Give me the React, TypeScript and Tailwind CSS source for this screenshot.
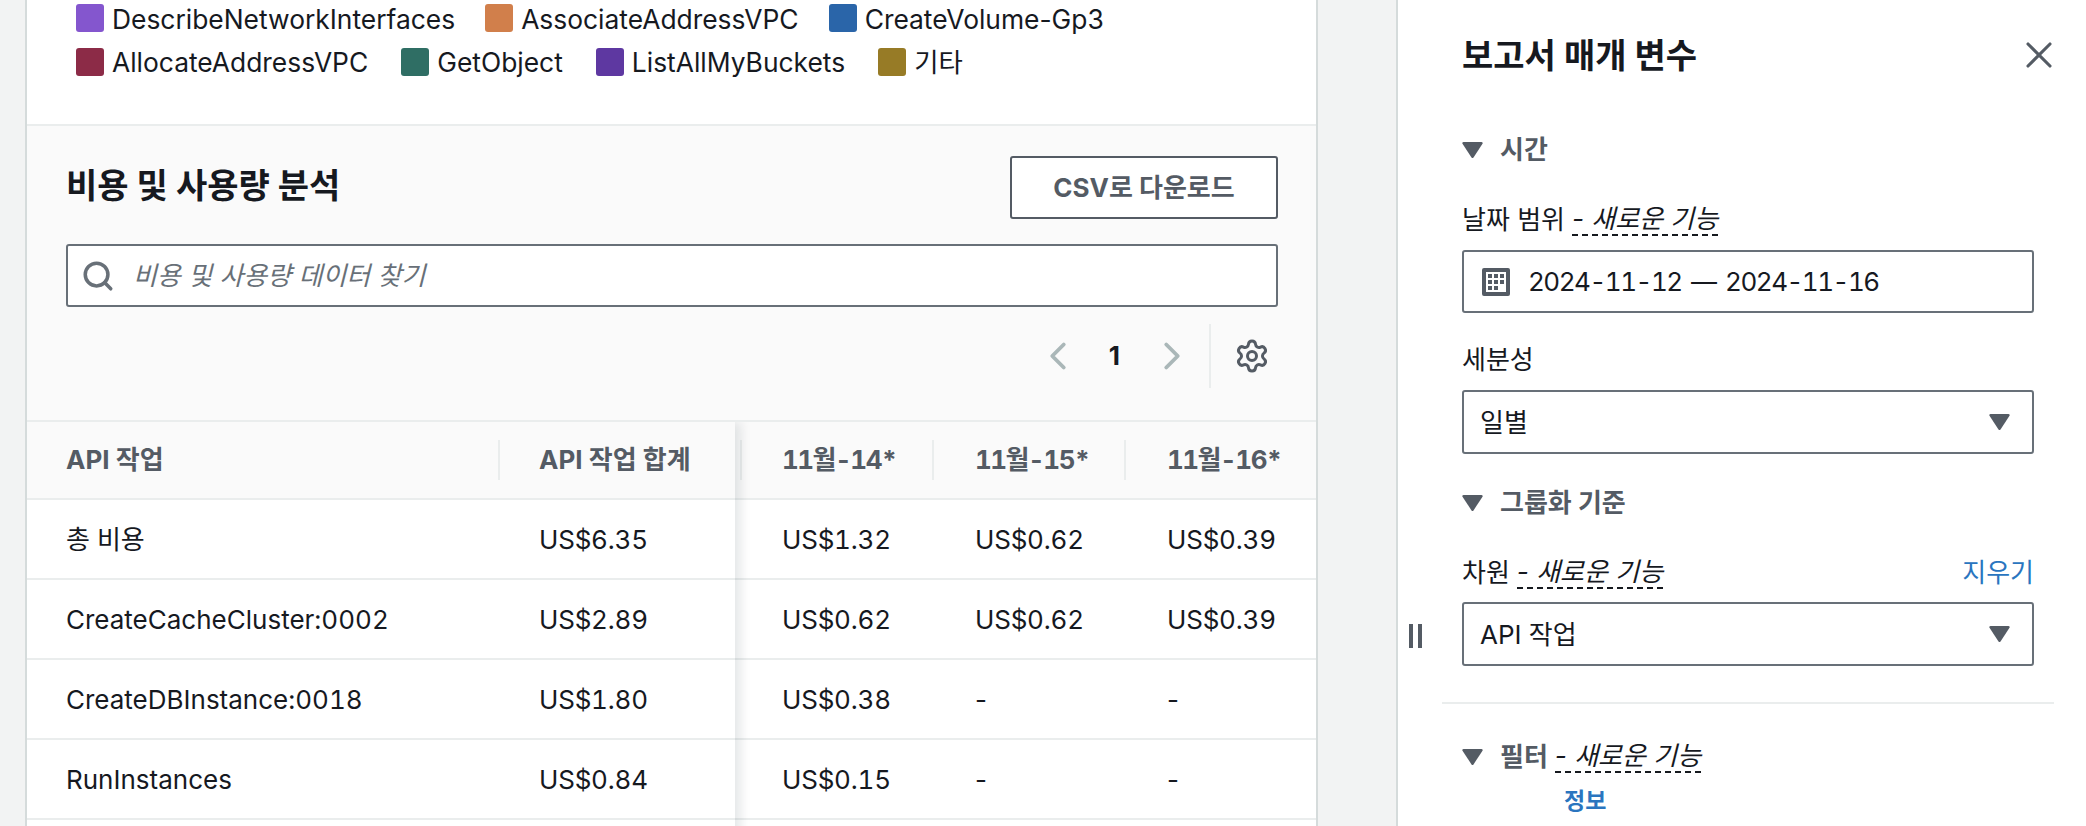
import React from 'react';
import { ChevronLeft, ChevronRight, Search, Settings, X } from 'lucide-react';

const legendRows = [
  [
    { label: 'DescribeNetworkInterfaces', color: 'bg-[#8456ce]' },
    { label: 'AssociateAddressVPC', color: 'bg-[#d17f4b]' },
    { label: 'CreateVolume-Gp3', color: 'bg-[#2a65a9]' },
  ],
  [
    { label: 'AllocateAddressVPC', color: 'bg-[#8c2b47]' },
    { label: 'GetObject', color: 'bg-[#2f6e64]' },
    { label: 'ListAllMyBuckets', color: 'bg-[#5e38a1]' },
    { label: '기타', color: 'bg-[#977b26]' },
  ],
];

const rows = [
  { name: '총 비용', total: 'US$6.35', d14: 'US$1.32', d15: 'US$0.62', d16: 'US$0.39' },
  { name: 'CreateCacheCluster:0002', total: 'US$2.89', d14: 'US$0.62', d15: 'US$0.62', d16: 'US$0.39' },
  { name: 'CreateDBInstance:0018', total: 'US$1.80', d14: 'US$0.38', d15: '-', d16: '-' },
  { name: 'RunInstances', total: 'US$0.84', d14: 'US$0.15', d15: '-', d16: '-' },
  { name: '', total: '', d14: '', d15: '', d16: '' },
];

function Caret({ className }: { className?: string }) {
  return (
    <svg viewBox="0 0 21 16" className={className} fill="#545b64">
      <path d="M1.5 0h18a1.2 1.2 0 0 1 1 1.8L11.5 15.4a1.2 1.2 0 0 1-2 0L.5 1.8A1.2 1.2 0 0 1 1.5 0z" />
    </svg>
  );
}

function Amount({ value }: { value: string }) {
  return <span className={value === '-' ? '' : 'tabular-nums tracking-[-0.2px]'}>{value}</span>;
}

function DateHeader({ label }: { label: string }) {
  return <span className="tabular-nums tracking-[-1.5px]">{label}</span>;
}

function NewFeature() {
  return (
    <span className="ml-[7px] border-b-2 border-dashed border-[#16191f] pb-[1px] font-normal italic leading-[28px] text-[#16191f]">
      - 새로운 기능
    </span>
  );
}

function SelectBox({ label }: { label: string }) {
  return (
    <div className="flex h-[64px] w-[572px] items-center justify-between rounded-[3px] border-2 border-[#687078] bg-white pl-[16px] pr-[22px] text-[#16191f]">
      <span className="pt-[1px]">{label}</span>
      <Caret className="h-[16px] w-[21px]" />
    </div>
  );
}

function SectionTitle({ children }: { children: React.ReactNode }) {
  return (
    <div className="flex h-[32px] items-center gap-[17px] font-bold text-[#545b64]">
      <Caret className="h-[16px] w-[21px]" />
      <div className="flex items-center">{children}</div>
    </div>
  );
}

export default function App() {
  return (
    <div className="flex h-[826px] w-[2086px] overflow-hidden bg-[#f2f3f3] pl-[25px] font-['Inter','Noto_Sans_CJK_KR',sans-serif] text-[26px] leading-[32px] text-[#16191f]">
      {/* main card */}
      <div className="w-[1293px] shrink-0 border-x-2 border-[#d5dbdb] bg-white">
        <div className="flex h-[124px] flex-col gap-[16px] pl-[49px] pt-[4px] text-[26.4px]">
          {legendRows.map((legend, i) => (
            <div key={i} className={`flex h-[28px] items-center ${i === 0 ? 'gap-[30px]' : 'gap-[33px]'}`}>
              {legend.map((item) => (
                <div key={item.label} className="flex items-center gap-[8px]">
                  <span className={`h-[28px] w-[28px] rounded-[3px] ${item.color}`}></span>
                  <span className={`whitespace-nowrap ${i === 0 ? 'pt-[1px]' : ''}`}>{item.label}</span>
                </div>
              ))}
            </div>
          ))}
        </div>

        <div className="h-[298px] border-y-2 border-[#eaeded] bg-[#fafafa] pl-[39px] pr-[38px]">
          <div className="flex h-[93px] items-start justify-between pt-[30px]">
            <h2 className="text-[34px] font-bold leading-[60px]">비용 및 사용량 분석</h2>
            <button className="flex h-[63px] w-[268px] items-center justify-center rounded-[3px] border-2 border-[#545b64] bg-white font-bold text-[#545b64]">
              CSV로 다운로드
            </button>
          </div>
          <div className="mt-[25px] flex h-[63px] items-center rounded-[3px] border-2 border-[#687078] bg-white pl-[13px]">
            <Search className="h-[34px] w-[34px] text-[#687078]" strokeWidth={2.5} />
            <span className="ml-[18px] italic text-[#687078]">비용 및 사용량 데이터 찾기</span>
          </div>
          <div className="mt-[17px] flex h-[64px] items-center justify-end">
            <ChevronLeft className="h-[46px] w-[46px] text-[#aab7b8]" strokeWidth={2} />
            <span className="ml-[28px] font-bold">1</span>
            <ChevronRight className="ml-[29px] h-[46px] w-[46px] text-[#aab7b8]" strokeWidth={2} />
            <div className="ml-[14px] h-[64px] border-l-2 border-[#eaeded]"></div>
            <Settings className="ml-[23px] mr-[8px] h-[36px] w-[36px] text-[#545b64]" strokeWidth={2} />
          </div>
        </div>

        <div className="flex overflow-hidden">
          {/* sticky columns */}
          <div className="relative z-10 w-[708px] shrink-0 shadow-[6px_0_10px_rgba(0,28,36,0.1)]">
            <div className="grid h-[78px] grid-cols-[471px_237px] items-center border-b-2 border-[#eaeded] bg-[#fafafa] font-bold text-[#545b64]">
              <div className="pl-[39px]">API 작업</div>
              <div className="flex h-[40px] items-center border-l-2 border-[#eaeded] pl-[39px]">API 작업 합계</div>
            </div>
            {rows.map((row, i) => (
              <div key={i} className="grid h-[80px] grid-cols-[471px_237px] items-center border-b-2 border-[#eaeded] bg-white pt-[2px]">
                <div className="pl-[39px] tabular-nums">{row.name}</div>
                <div className="pl-[41px]">
                  <Amount value={row.total} />
                </div>
              </div>
            ))}
          </div>

          {/* scrolling columns */}
          <div className="flex-1">
            <div className="grid h-[78px] grid-cols-[197px_192px_192px] items-center border-b-2 border-[#eaeded] bg-[#fafafa] font-bold text-[#545b64]">
              <div className="ml-[5px] flex h-[40px] items-center border-l-2 border-[#eaeded] pl-[40px]">
                <DateHeader label="11월-14*" />
              </div>
              <div className="flex h-[40px] items-center border-l-2 border-[#eaeded] pl-[41px]">
                <DateHeader label="11월-15*" />
              </div>
              <div className="flex h-[40px] items-center border-l-2 border-[#eaeded] pl-[41px]">
                <DateHeader label="11월-16*" />
              </div>
            </div>
            {rows.map((row, i) => (
              <div key={i} className="grid h-[80px] grid-cols-[197px_192px_192px] items-center border-b-2 border-[#eaeded] bg-white pt-[2px]">
                <div className="pl-[47px]">
                  <Amount value={row.d14} />
                </div>
                <div className="pl-[43px]">
                  <Amount value={row.d15} />
                </div>
                <div className="pl-[43px]">
                  <Amount value={row.d16} />
                </div>
              </div>
            ))}
          </div>
        </div>
      </div>

      {/* report parameters panel */}
      <div className="relative ml-[78px] flex-1 border-l-2 border-[#d5dbdb] bg-white pl-[64px]">
        <div className="flex h-[110px] items-center justify-between pr-[25px]">
          <h2 className="pt-[2px] text-[34px] font-bold">보고서 매개 변수</h2>
          <X className="h-[44px] w-[44px] text-[#545b64]" strokeWidth={1.7} />
        </div>

        <div className="mt-[24px]">
          <SectionTitle>시간</SectionTitle>
        </div>

        <div className="mt-[38px] flex h-[32px] items-center">
          날짜 범위
          <NewFeature />
        </div>
        <div className="mt-[14px] flex h-[63px] w-[572px] items-center rounded-[3px] border-2 border-[#687078] bg-white pl-[18px]">
          <svg viewBox="0 0 28 28" className="h-[28px] w-[28px]" fill="#545b64">
            <path
              fillRule="evenodd"
              d="M2 0h24a2 2 0 0 1 2 2v24a2 2 0 0 1-2 2H2a2 2 0 0 1-2-2V2a2 2 0 0 1 2-2zm2 4v20h20V4z"
            />
            <path d="M6 6h4v4H6zM12 6h4v4h-4zM18 6h4v4h-4zM6 12h4v4H6zM12 12h4v4h-4zM18 12h4v4h-4zM6 18h4v4H6zM12 18h4v4h-4z" />
          </svg>
          <span className="ml-[18px] pt-[1px] tabular-nums tracking-[-1.5px] [word-spacing:4px]">2024-11-12 — 2024-11-16</span>
        </div>

        <div className="mt-[31px] h-[32px]">세분성</div>
        <div className="mt-[14px]">
          <SelectBox label="일별" />
        </div>

        <div className="mt-[33px]">
          <SectionTitle>그룹화 기준</SectionTitle>
        </div>

        <div className="mt-[38px] flex h-[32px] w-[572px] items-center justify-between">
          <div className="flex items-center">
            차원
            <NewFeature />
          </div>
          <span className="text-[#2a75bf]">지우기</span>
        </div>
        <div className="mt-[13px]">
          <SelectBox label="API 작업" />
        </div>

        <div className="-ml-[20px] mt-[36px] w-[612px] border-t-2 border-[#eaeded]"></div>

        <div className="mt-[37px]">
          <SectionTitle>
            필터
            <NewFeature />
          </SectionTitle>
        </div>
        <div className="ml-[102px] mt-[14px] text-[23px] font-bold leading-[28px] text-[#2a75bf]">정보</div>

        {/* drag handle */}
        <div className="absolute left-[11px] top-[624px] flex gap-[5px]">
          <span className="h-[24px] w-[4px] bg-[#545b64]"></span>
          <span className="h-[24px] w-[4px] bg-[#545b64]"></span>
        </div>
      </div>
    </div>
  );
}
